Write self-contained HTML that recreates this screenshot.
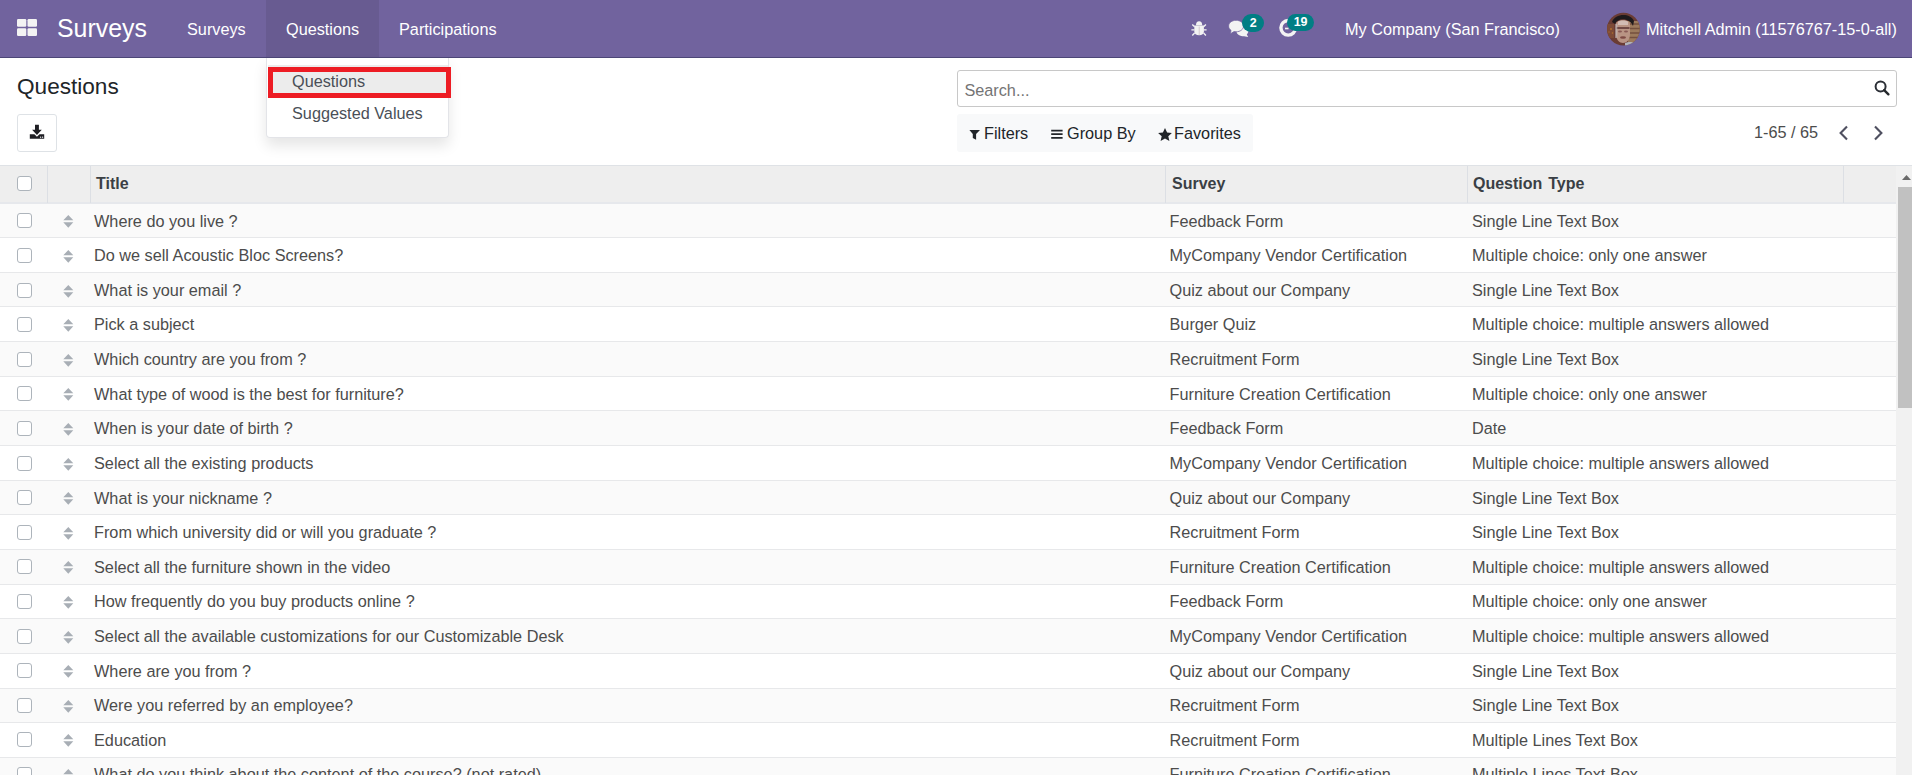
<!DOCTYPE html>
<html><head><meta charset="utf-8">
<style>
*{box-sizing:border-box;margin:0;padding:0}
html,body{width:1912px;height:775px;overflow:hidden;background:#fff;font-family:"Liberation Sans",sans-serif;color:#4c4c4c;font-size:16.25px}
.nav{position:absolute;left:0;top:0;width:1912px;height:58px;background:#71639e;border-bottom:1px solid #4c4677;color:#fff}
.nav .t{position:absolute;top:1px;line-height:57px;white-space:nowrap}
.brand{font-size:24.9px}
.act{position:absolute;left:266px;top:0;width:113px;height:57px;background:#685b91}
.badge{position:absolute;background:#017e84;color:#fff;font-weight:bold;font-size:12.5px;text-align:center;letter-spacing:-0.3px}
.title{position:absolute;left:17px;top:72.5px;font-size:22.6px;color:#212529;line-height:28px}
.dl{position:absolute;left:17px;top:114px;width:40px;height:38px;border:1px solid #dee2e6;border-radius:3px;background:#fff}
.search{position:absolute;left:957px;top:70px;width:940px;height:37px;border:1px solid #c8c8c8;border-radius:3px}
.search .ph{position:absolute;left:6.4px;top:1px;line-height:37px;color:#747474}
.fbar{position:absolute;left:957px;top:114px;width:296px;height:38px;background:#f8f9fa;border-radius:3px}
.fbar span{position:absolute;top:0;line-height:38px;color:#212529}
.pager{position:absolute;left:1754px;top:118px;line-height:28px;color:#4c4c4c}
.thead{position:absolute;left:0;top:165px;width:1896px;height:39px;background:#eee;border-top:1px solid #dfe2e6;border-bottom:2px solid #e6e8ec}
.thead span{position:absolute;top:0;line-height:35px;font-weight:bold;color:#3a3f45;font-size:16px;word-spacing:1.5px}
.vsep{position:absolute;top:0;width:1px;height:37px;background:#dcdfe4}
.row{position:absolute;left:0;width:1896px;height:34.667px;border-bottom:1px solid #e7e8ea}
.r0{background:#fafafa} .r1{background:#fff}
.tx{position:absolute;line-height:34px;white-space:nowrap}
i{position:absolute;display:block}
.cb{left:17px;width:15px;height:15px;border:1px solid #adb4bb;border-radius:3px;background:#fff}
.hd{left:62.5px;line-height:0}
.t1{left:94px} .t2{left:1169.5px} .t3{left:1472px}
.sb{position:absolute;left:1896px;top:166px;width:16px;height:609px;background:#f1f1f1}
.thumb{position:absolute;left:1898px;top:187px;width:14px;height:221px;background:#c1c1c1}
.dd{position:absolute;left:266px;top:58px;width:183px;height:79.5px;background:#fff;border:1px solid #e3e4e8;border-top:none;border-radius:0 0 4px 4px;box-shadow:0 8px 14px rgba(0,0,0,0.10)}
.dd .it{position:absolute;left:24px;line-height:28px;color:#4a4f57;white-space:nowrap}
.red{position:absolute;left:268px;top:67px;width:183px;height:31px;border:5px solid #ed1c24}
.hl{position:absolute;left:268px;top:65px;width:180px;height:33px;background:#ececec}
</style></head><body>
<div class="nav">
  <div class="act"></div>
  <svg style="position:absolute;left:17px;top:19px" width="20" height="17" viewBox="0 0 20 17">
<rect x="0" y="0" width="9.3" height="7.8" rx="1.2" fill="#f3f3f3"/><rect x="10.5" y="0" width="9.5" height="7.8" rx="1.2" fill="#f3f3f3"/>
<rect x="0" y="9.2" width="9.3" height="7.8" rx="1.2" fill="#f3f3f3"/><rect x="10.5" y="9.2" width="9.5" height="7.8" rx="1.2" fill="#f3f3f3"/></svg>
  <span class="t brand" style="left:57px;top:0">Surveys</span>
  <span class="t" style="left:187px">Surveys</span>
  <span class="t" style="left:286px">Questions</span>
  <span class="t" style="left:399px">Participations</span>
  <svg style="position:absolute;left:1185px;top:10px" width="30" height="30" viewBox="0 0 30 30">
<ellipse cx="14.1" cy="15.3" rx="3.1" ry="4" fill="#f3f3f3"/>
<path d="M9.3 15.6H18.9V21.5C18.9 24 17 25.3 14.1 25.3C11.2 25.3 9.3 24 9.3 21.5Z" fill="#f3f3f3"/>
<rect x="10.5" y="15.1" width="7.2" height="0.6" fill="#b0aec0"/>
<rect x="13.8" y="16.5" width="0.7" height="8.6" fill="#c8b8c0"/>
<g stroke="#f3f3f3" stroke-width="1.35" stroke-linecap="butt">
<path d="M7.3 14.5L9.6 16.8M6.4 19.8H9.5M7.3 25.4L9.6 23.1"/>
<path d="M20.9 14.5L18.6 16.8M21.6 19.8H18.7M20.9 25.4L18.6 23.1"/>
</g></svg><svg style="position:absolute;left:1222px;top:8px" width="50" height="34" viewBox="0 0 50 34">
<path d="M15.2 21.3C15.2 21.3 14.5 22.2 14.5 23.3C14.5 26.6 18.3 28.2 22 28.3L26.2 29.1L24.8 26.5C26 25.3 26.4 24 26.4 22.6C26.4 20.5 24.5 19.5 21 19.6Z" fill="#f3f3f3"/>
<path d="M14.1 12.3C9.9 12.3 6.6 14.8 6.6 18C6.6 19.9 7.6 21.4 9.1 22.5L8 25.9L12.1 23.6C12.7 23.7 13.4 23.8 14.1 23.8C18.3 23.8 21.6 21.2 21.6 18C21.6 14.8 18.3 12.3 14.1 12.3Z" fill="#f3f3f3" stroke="#71639e" stroke-width="0.8"/>
</svg><svg style="position:absolute;left:1272px;top:8px" width="30" height="34" viewBox="0 0 30 34">
<circle cx="16.2" cy="19.8" r="7.3" fill="none" stroke="#f3f3f3" stroke-width="3.4"/>
<path d="M13 20.5H16.5" stroke="#f3f3f3" stroke-width="1.6"/>
</svg>
  <div class="badge" style="left:1242px;top:13.5px;width:22px;height:18.5px;border-radius:9.5px;line-height:18.5px">2</div>
  <div class="badge" style="left:1287px;top:13.7px;width:27px;height:17.3px;border-radius:8.7px;line-height:16.5px">19</div>
  <span class="t" style="left:1345px">My Company (San Francisco)</span>
  <svg style="position:absolute;left:1606px;top:12px" width="34" height="34" viewBox="0 0 34 34">
<defs><clipPath id="av"><circle cx="17.4" cy="17.1" r="16.4"/></clipPath></defs>
<g clip-path="url(#av)">
<rect width="34" height="34" fill="#6a3c34"/>
<rect x="22" y="9" width="12" height="22" fill="#9c7a5c"/>
<path d="M22 12H34M22 16.5H34M22 21H34M22 25.5H34" stroke="#74503e" stroke-width="1.3"/>
<rect x="0" y="12" width="8" height="14" fill="#7c4a36"/>
<circle cx="5" cy="17" r="0.9" fill="#b8742e"/><circle cx="6.5" cy="21" r="0.8" fill="#b0702e"/><circle cx="3" cy="20" r="0.7" fill="#a86a30"/>
<path d="M6 10C9 1.5 24 0.5 28 9L27 14C24 6 12 5 9 12Z" fill="#1e1a1c"/>
<path d="M10 12C10 7 24 7 24 12V22C24 28 20.5 31 17 31C13.5 31 10 28 10 22Z" fill="#b99484"/>
<path d="M12 9.5C14 8 20 8 22 9.5L22 13L12 13Z" fill="#d2bcb4"/>
<path d="M10.5 16H23.5" stroke="#5a3030" stroke-width="1.5"/>
<ellipse cx="14" cy="19.5" rx="2" ry="1.1" fill="#8a5a56"/><ellipse cx="20" cy="19.5" rx="2" ry="1.1" fill="#8a5a56"/>
<ellipse cx="17" cy="25.5" rx="3" ry="1.3" fill="#7e4a44"/>
<rect x="9" y="12" width="2.4" height="14" fill="#c8c8cc" opacity="0.5"/>
<path d="M19 31C22 29.5 26 29.5 28 31L28 34H19Z" fill="#b0b4bc"/>
</g></svg>
  <span class="t" style="left:1646px">Mitchell Admin (11576767-15-0-all)</span>
</div>
<div class="title">Questions</div>
<div class="dl"></div><svg style="position:absolute;left:29px;top:124px" width="16" height="16" viewBox="0 0 16 16">
<path d="M0.8 10.2H5.4L7.95 12.7L10.5 10.2H15.2V14.7H0.8Z" fill="#1f1f24"/>
<path d="M6 0.8H9.9V5.7H12.8L7.95 11.1L3.1 5.7H6Z" fill="#1f1f24"/>
<circle cx="11.6" cy="13.2" r="0.65" fill="#fff"/><circle cx="13.6" cy="13.2" r="0.65" fill="#fff"/>
</svg>
<div class="search"><span class="ph">Search...</span></div><svg style="position:absolute;left:1873px;top:79px" width="18" height="18" viewBox="0 0 18 18">
<circle cx="7.6" cy="7.5" r="5" fill="none" stroke="#2b2f36" stroke-width="2"/>
<path d="M11.2 11.1L15.4 15.3" stroke="#23272b" stroke-width="2.4" stroke-linecap="round"/>
</svg>
<div class="fbar"><span style="left:27px">Filters</span><span style="left:110px">Group By</span><span style="left:217px">Favorites</span></div><svg style="position:absolute;left:965px;top:125px" width="220" height="20" viewBox="0 0 220 20">
<path d="M4.4 4.9H15L11.1 9V14.8L7.8 13.1V9Z" fill="#212529"/>
<path d="M86.2 5.6H97.6M86.2 9.2H97.6M86.2 12.8H97.6" stroke="#212529" stroke-width="1.7"/>
<path d="M200 2.9L202.1 7.4L206.9 7.9L203.3 11.2L204.4 15.9L200 13.4L195.6 15.9L196.7 11.2L193.1 7.9L197.9 7.4Z" fill="#212529"/>
</svg>
<div class="pager">1-65 / 65</div><svg style="position:absolute;left:1836px;top:123px" width="50" height="20" viewBox="0 0 50 20">
<path d="M11 3.4L4.6 9.9L11 16.4" fill="none" stroke="#4f5060" stroke-width="2.1"/>
<path d="M39 3.4L45.4 9.9L39 16.4" fill="none" stroke="#4f5060" stroke-width="2.1"/>
</svg>
<div class="row r0" style="top:203.45px"></div><i class="cb" style="top:213.00px"></i><i class="hd" style="top:214.80px"><svg width="11" height="14" viewBox="0 0 11 14"><path d="M5.3 0L10.3 5.3H0.3Z M0.3 7.3H10.3L5.3 12.8Z" fill="#a8aeb5"/></svg></i><span class="tx t1" style="top:204px">Where do you live ?</span><span class="tx t2" style="top:204px">Feedback Form</span><span class="tx t3" style="top:204px">Single Line Text Box</span>
<div class="row r1" style="top:238.12px"></div><i class="cb" style="top:248.00px"></i><i class="hd" style="top:249.80px"><svg width="11" height="14" viewBox="0 0 11 14"><path d="M5.3 0L10.3 5.3H0.3Z M0.3 7.3H10.3L5.3 12.8Z" fill="#a8aeb5"/></svg></i><span class="tx t1" style="top:238px">Do we sell Acoustic Bloc Screens?</span><span class="tx t2" style="top:238px">MyCompany Vendor Certification</span><span class="tx t3" style="top:238px">Multiple choice: only one answer</span>
<div class="row r0" style="top:272.78px"></div><i class="cb" style="top:283.00px"></i><i class="hd" style="top:284.80px"><svg width="11" height="14" viewBox="0 0 11 14"><path d="M5.3 0L10.3 5.3H0.3Z M0.3 7.3H10.3L5.3 12.8Z" fill="#a8aeb5"/></svg></i><span class="tx t1" style="top:273px">What is your email ?</span><span class="tx t2" style="top:273px">Quiz about our Company</span><span class="tx t3" style="top:273px">Single Line Text Box</span>
<div class="row r1" style="top:307.45px"></div><i class="cb" style="top:317.00px"></i><i class="hd" style="top:318.80px"><svg width="11" height="14" viewBox="0 0 11 14"><path d="M5.3 0L10.3 5.3H0.3Z M0.3 7.3H10.3L5.3 12.8Z" fill="#a8aeb5"/></svg></i><span class="tx t1" style="top:307px">Pick a subject</span><span class="tx t2" style="top:307px">Burger Quiz</span><span class="tx t3" style="top:307px">Multiple choice: multiple answers allowed</span>
<div class="row r0" style="top:342.12px"></div><i class="cb" style="top:352.00px"></i><i class="hd" style="top:353.80px"><svg width="11" height="14" viewBox="0 0 11 14"><path d="M5.3 0L10.3 5.3H0.3Z M0.3 7.3H10.3L5.3 12.8Z" fill="#a8aeb5"/></svg></i><span class="tx t1" style="top:342px">Which country are you from ?</span><span class="tx t2" style="top:342px">Recruitment Form</span><span class="tx t3" style="top:342px">Single Line Text Box</span>
<div class="row r1" style="top:376.78px"></div><i class="cb" style="top:386.00px"></i><i class="hd" style="top:387.80px"><svg width="11" height="14" viewBox="0 0 11 14"><path d="M5.3 0L10.3 5.3H0.3Z M0.3 7.3H10.3L5.3 12.8Z" fill="#a8aeb5"/></svg></i><span class="tx t1" style="top:377px">What type of wood is the best for furniture?</span><span class="tx t2" style="top:377px">Furniture Creation Certification</span><span class="tx t3" style="top:377px">Multiple choice: only one answer</span>
<div class="row r0" style="top:411.45px"></div><i class="cb" style="top:421.00px"></i><i class="hd" style="top:422.80px"><svg width="11" height="14" viewBox="0 0 11 14"><path d="M5.3 0L10.3 5.3H0.3Z M0.3 7.3H10.3L5.3 12.8Z" fill="#a8aeb5"/></svg></i><span class="tx t1" style="top:411px">When is your date of birth ?</span><span class="tx t2" style="top:411px">Feedback Form</span><span class="tx t3" style="top:411px">Date</span>
<div class="row r1" style="top:446.12px"></div><i class="cb" style="top:456.00px"></i><i class="hd" style="top:457.80px"><svg width="11" height="14" viewBox="0 0 11 14"><path d="M5.3 0L10.3 5.3H0.3Z M0.3 7.3H10.3L5.3 12.8Z" fill="#a8aeb5"/></svg></i><span class="tx t1" style="top:446px">Select all the existing products</span><span class="tx t2" style="top:446px">MyCompany Vendor Certification</span><span class="tx t3" style="top:446px">Multiple choice: multiple answers allowed</span>
<div class="row r0" style="top:480.79px"></div><i class="cb" style="top:490.00px"></i><i class="hd" style="top:491.80px"><svg width="11" height="14" viewBox="0 0 11 14"><path d="M5.3 0L10.3 5.3H0.3Z M0.3 7.3H10.3L5.3 12.8Z" fill="#a8aeb5"/></svg></i><span class="tx t1" style="top:481px">What is your nickname ?</span><span class="tx t2" style="top:481px">Quiz about our Company</span><span class="tx t3" style="top:481px">Single Line Text Box</span>
<div class="row r1" style="top:515.45px"></div><i class="cb" style="top:525.00px"></i><i class="hd" style="top:526.80px"><svg width="11" height="14" viewBox="0 0 11 14"><path d="M5.3 0L10.3 5.3H0.3Z M0.3 7.3H10.3L5.3 12.8Z" fill="#a8aeb5"/></svg></i><span class="tx t1" style="top:515px">From which university did or will you graduate ?</span><span class="tx t2" style="top:515px">Recruitment Form</span><span class="tx t3" style="top:515px">Single Line Text Box</span>
<div class="row r0" style="top:550.12px"></div><i class="cb" style="top:559.00px"></i><i class="hd" style="top:560.80px"><svg width="11" height="14" viewBox="0 0 11 14"><path d="M5.3 0L10.3 5.3H0.3Z M0.3 7.3H10.3L5.3 12.8Z" fill="#a8aeb5"/></svg></i><span class="tx t1" style="top:550px">Select all the furniture shown in the video</span><span class="tx t2" style="top:550px">Furniture Creation Certification</span><span class="tx t3" style="top:550px">Multiple choice: multiple answers allowed</span>
<div class="row r1" style="top:584.79px"></div><i class="cb" style="top:594.00px"></i><i class="hd" style="top:595.80px"><svg width="11" height="14" viewBox="0 0 11 14"><path d="M5.3 0L10.3 5.3H0.3Z M0.3 7.3H10.3L5.3 12.8Z" fill="#a8aeb5"/></svg></i><span class="tx t1" style="top:584px">How frequently do you buy products online ?</span><span class="tx t2" style="top:584px">Feedback Form</span><span class="tx t3" style="top:584px">Multiple choice: only one answer</span>
<div class="row r0" style="top:619.45px"></div><i class="cb" style="top:629.00px"></i><i class="hd" style="top:630.80px"><svg width="11" height="14" viewBox="0 0 11 14"><path d="M5.3 0L10.3 5.3H0.3Z M0.3 7.3H10.3L5.3 12.8Z" fill="#a8aeb5"/></svg></i><span class="tx t1" style="top:619px">Select all the available customizations for our Customizable Desk</span><span class="tx t2" style="top:619px">MyCompany Vendor Certification</span><span class="tx t3" style="top:619px">Multiple choice: multiple answers allowed</span>
<div class="row r1" style="top:654.12px"></div><i class="cb" style="top:663.00px"></i><i class="hd" style="top:664.80px"><svg width="11" height="14" viewBox="0 0 11 14"><path d="M5.3 0L10.3 5.3H0.3Z M0.3 7.3H10.3L5.3 12.8Z" fill="#a8aeb5"/></svg></i><span class="tx t1" style="top:654px">Where are you from ?</span><span class="tx t2" style="top:654px">Quiz about our Company</span><span class="tx t3" style="top:654px">Single Line Text Box</span>
<div class="row r0" style="top:688.79px"></div><i class="cb" style="top:698.00px"></i><i class="hd" style="top:699.80px"><svg width="11" height="14" viewBox="0 0 11 14"><path d="M5.3 0L10.3 5.3H0.3Z M0.3 7.3H10.3L5.3 12.8Z" fill="#a8aeb5"/></svg></i><span class="tx t1" style="top:688px">Were you referred by an employee?</span><span class="tx t2" style="top:688px">Recruitment Form</span><span class="tx t3" style="top:688px">Single Line Text Box</span>
<div class="row r1" style="top:723.45px"></div><i class="cb" style="top:732.00px"></i><i class="hd" style="top:733.80px"><svg width="11" height="14" viewBox="0 0 11 14"><path d="M5.3 0L10.3 5.3H0.3Z M0.3 7.3H10.3L5.3 12.8Z" fill="#a8aeb5"/></svg></i><span class="tx t1" style="top:723px">Education</span><span class="tx t2" style="top:723px">Recruitment Form</span><span class="tx t3" style="top:723px">Multiple Lines Text Box</span>
<div class="row r0" style="top:758.12px"></div><i class="cb" style="top:767.00px"></i><i class="hd" style="top:768.80px"><svg width="11" height="14" viewBox="0 0 11 14"><path d="M5.3 0L10.3 5.3H0.3Z M0.3 7.3H10.3L5.3 12.8Z" fill="#a8aeb5"/></svg></i><span class="tx t1" style="top:757px">What do you think about the content of the course? (not rated)</span><span class="tx t2" style="top:757px">Furniture Creation Certification</span><span class="tx t3" style="top:757px">Multiple Lines Text Box</span>
<div class="thead">
 <i class="cb" style="top:10px"></i>
 <div class="vsep" style="left:47px"></div><div class="vsep" style="left:90px"></div>
 <span style="left:96px">Title</span>
 <div class="vsep" style="left:1165px"></div><span style="left:1172px">Survey</span>
 <div class="vsep" style="left:1467px"></div><span style="left:1473px">Question Type</span>
 <div class="vsep" style="left:1843px"></div>
</div>

<div style="position:absolute;left:1896px;top:165px;width:16px;height:1px;background:#dfe2e6"></div><div class="sb"></div><div class="thumb"></div>
<svg style="position:absolute;left:1900px;top:172px" width="12" height="10" viewBox="0 0 12 10"><path d="M2 8L6.5 3L11 8Z" fill="#6a6a6a"/></svg>
<div class="dd"></div>
<div class="hl"></div>
<div class="red"></div>
<div class="dd-items"><span class="it" style="position:absolute;left:292px;top:67px;line-height:28px;color:#4a4f57">Questions</span><span style="position:absolute;left:292px;top:99px;line-height:28px;color:#4a4f57">Suggested Values</span></div>
</body></html>
